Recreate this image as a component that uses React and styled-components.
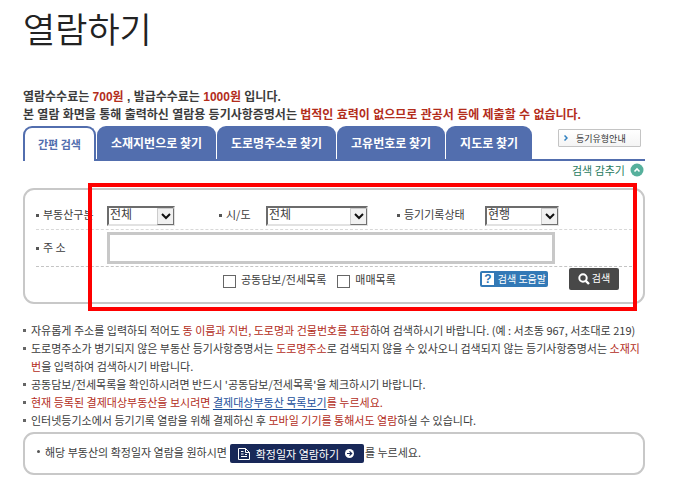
import styled, { createGlobalStyle } from "styled-components";

const mainStyle = {
  fontColor: "#3c3c3c",
  redColor: "#b32d1b",
  blueColor: "#526eae",
  lineColor: "#c8c8c8",
};

const GlobalStyle = createGlobalStyle`
  * {
    box-sizing: border-box;
  }
  body {
    margin: 0;
    background-color: #fff;
    color: ${mainStyle.fontColor};
    font-family: "Noto Sans CJK KR", sans-serif;
    font-size: 11px;
    line-height: 18px;
  }
  button, input, select {
    margin: 0;
    font-family: inherit;
  }
`;

const Wrap = styled.main`
  padding: 8px 55px 24px 23px;
`;
const Title = styled.h1`
  margin: 0 0 40px;
  font-size: 35px;
  font-weight: 350;
  line-height: 40px;
  color: #222;
`;
const Fee = styled.p`
  margin: 0;
  font-family: "Liberation Sans", "Noto Sans CJK KR", sans-serif;
  font-size: 12px;
  font-weight: 700;
  white-space: nowrap;
`;
const Red = styled.span`
  color: ${mainStyle.redColor};
`;
const TabBar = styled.div`
  display: flex;
  align-items: flex-end;
  justify-content: space-between;
  margin-top: 2px;
  background: linear-gradient(${mainStyle.blueColor}, ${mainStyle.blueColor})
    bottom / 100% 2px no-repeat;
`;
const Tabs = styled.div`
  display: flex;
  gap: 1px;
`;
const Tab = styled.button`
  height: 35px;
  padding: 0 ${(props) => (props.$on ? 13 : 14)}px 2px;
  border: 0 solid ${mainStyle.blueColor};
  border-width: ${(props) => (props.$on ? "2px 2px 0" : "0")};
  border-radius: 9px 9px 0 0;
  background-color: ${(props) => (props.$on ? "#fff" : mainStyle.blueColor)};
  color: ${(props) => (props.$on ? mainStyle.blueColor : "#fff")};
  font-size: ${(props) => (props.$on ? 11 : 12)}px;
  font-weight: 700;
  white-space: nowrap;
`;
const GuideBtn = styled.button`
  display: flex;
  align-items: center;
  gap: 8px;
  width: 83px;
  height: 18px;
  margin: 0 4px 14px 0;
  padding: 0 5px;
  border: 1px solid #c4c4c4;
  border-radius: 1px;
  background: linear-gradient(#fff, #f4f4f4);
  color: #333;
  font-size: 9px;
  white-space: nowrap;
`;
const HideBtn = styled.button`
  display: flex;
  align-items: center;
  gap: 5px;
  height: 18px;
  margin: 0 1px 9px auto;
  padding: 0;
  border: 0;
  background: none;
  color: #287a5e;
  font-size: 11px;
`;
const Panel = styled.div`
  position: relative;
  border: 2px solid ${mainStyle.lineColor};
  border-radius: 11px;
`;
const SearchForm = styled.form`
  padding: 0 11px;
`;
const Mark = styled.div`
  position: absolute;
  top: -7px;
  right: 6px;
  bottom: -9px;
  left: 63px;
  border: 4px solid #fe0000;
  pointer-events: none;
`;
const FilterRow = styled.div`
  display: grid;
  grid-template-columns: 71px 112px 47px 131px 88px 1fr;
  padding: 16px 0 3px;
  border-bottom: 1px dashed #d8d8d8;
`;
const AddressRow = styled.div`
  display: grid;
  grid-template-columns: 71px 1fr;
  align-items: center;
  padding: 2px 77px 2px 0;
  border-bottom: 1px dashed #c4c4c4;
`;
const Label = styled.label`
  display: flex;
  align-items: center;
  gap: 4px;
  height: 18px;
  padding-bottom: 3px;
  white-space: nowrap;

  &::before {
    content: "";
    width: 3px;
    height: 3px;
    margin-top: 4px;
    background-color: #555;
  }
`;
const SelectWrap = styled.div`
  position: relative;
  width: ${(props) => props.$width}px;
  height: 20px;
`;
const Select = styled.select`
  appearance: none;
  display: block;
  width: 100%;
  height: 20px;
  padding: 0 20px 4px 1px;
  border: solid;
  border-width: 2px;
  border-color: #6c6c6c #e2e2e2 #e2e2e2 #6c6c6c;
  border-radius: 0;
  background-color: #fff;
  color: ${mainStyle.fontColor};
  font-size: 12px;
  line-height: 12px;
`;
const Arrow = styled.span`
  position: absolute;
  top: 2px;
  right: 1px;
  display: flex;
  align-items: center;
  justify-content: center;
  width: 17px;
  height: 17px;
  border: 1px solid #707070;
  border-top-color: #ccc;
  border-left-color: #ccc;
  background-color: #f1f1f1;
  pointer-events: none;
`;
const AddressInput = styled.input`
  width: 100%;
  height: 32px;
  padding: 0 4px;
  border: 3px solid ${mainStyle.lineColor};
  background-color: #fff;
  font-size: 12px;
`;
const ActionRow = styled.div`
  display: flex;
  align-items: center;
  padding: 1px 13px 12px 187px;
`;
const Checks = styled.div`
  display: flex;
  gap: 11px;
  margin-right: auto;
`;
const CheckLabel = styled.label`
  display: flex;
  align-items: flex-end;
  gap: 5px;
  height: 18px;
  white-space: nowrap;
`;
const Check = styled.input`
  appearance: none;
  width: 13px;
  height: 13px;
  border: 1px solid #666;
  background-color: #fff;

  &:checked {
    background-color: ${mainStyle.blueColor};
  }
`;
const HelpBtn = styled.button`
  display: flex;
  align-items: center;
  gap: 4px;
  width: 68px;
  height: 16px;
  margin-right: 21px;
  padding: 0 2px;
  border: 0;
  border-radius: 2px;
  background-color: #3379b6;
  color: #fff;
  font-size: 10px;
  line-height: 14px;
  white-space: nowrap;
`;
const Question = styled.span`
  width: 12px;
  height: 12px;
  background-color: #fff;
  color: #2a73b3;
  font-family: "Liberation Sans", sans-serif;
  font-size: 12px;
  font-weight: 700;
  line-height: 12px;
`;
const SearchBtn = styled.button`
  display: flex;
  align-items: center;
  justify-content: center;
  gap: 2px;
  width: 50px;
  height: 22px;
  padding: 0 0 4px;
  border: 0;
  border-radius: 2px;
  background-color: #484848;
  color: #fff;
  font-size: 10px;
  white-space: nowrap;

  svg {
    margin-top: 4px;
  }
`;
const Notes = styled.ul`
  margin: 17px -5px 3px 0;
  padding: 0;
  list-style: none;
`;
const Note = styled.li`
  position: relative;
  padding-left: 8px;

  &::before {
    content: "";
    position: absolute;
    top: 8px;
    left: 0;
    width: 3px;
    height: 3px;
    background-color: #666;
  }
`;
const Link = styled.a`
  color: #1c4f9b;
  text-decoration: underline;
  text-underline-offset: 2px;
`;
const DatePanel = styled(Panel)`
  display: flex;
  align-items: center;
  height: 43px;
  padding: 0 11px 4px;
  white-space: nowrap;
`;
const Dot = styled.span`
  width: 3px;
  height: 3px;
  margin: 0 5px 0 1px;
  border-radius: 50%;
  background-color: #555;
`;
const DateBtn = styled.button`
  display: flex;
  align-items: center;
  justify-content: space-between;
  width: 134px;
  height: 19px;
  margin: 4px 1px 0 3px;
  padding: 0 10px 0 8px;
  border: 0;
  border-radius: 2px;
  background-color: #182858;
  color: #fff;
  font-size: 11px;
`;

const tabs = [
  "간편 검색",
  "소재지번으로 찾기",
  "도로명주소로 찾기",
  "고유번호로 찾기",
  "지도로 찾기",
];

const filters = [
  { id: "kind", label: "부동산구분", value: "전체", width: 68 },
  { id: "city", label: "시/도", value: "전체", width: 102 },
  { id: "state", label: "등기기록상태", value: "현행", width: 74 },
];

const Filter = ({ id, label, value, width }) => (
  <>
    <Label htmlFor={id}>{label}</Label>
    <SelectWrap $width={width}>
      <Select id={id}>
        <option>{value}</option>
      </Select>
      <Arrow>
        <svg width="10" height="7" viewBox="0 0 10 7" fill="none">
          <path d="M1 1l4 4 4-4" stroke="#111" strokeWidth="2" />
        </svg>
      </Arrow>
    </SelectWrap>
  </>
);

export default function App() {
  return (
    <>
      <GlobalStyle />
      <Wrap>
        <Title>열람하기</Title>
        <Fee>
          열람수수료는 <Red>700원</Red> , 발급수수료는 <Red>1000원</Red> 입니다.
        </Fee>
        <Fee>
          본 열람 화면을 통해 출력하신 열람용 등기사항증명서는{" "}
          <Red>법적인 효력이 없으므로 관공서 등에 제출할 수 없습니다.</Red>
        </Fee>
        <TabBar>
          <Tabs>
            {tabs.map((tab, i) => (
              <Tab key={tab} type="button" $on={i === 0}>
                {tab}
              </Tab>
            ))}
          </Tabs>
          <GuideBtn type="button">
            <svg width="4" height="6" viewBox="0 0 4 6" fill="none">
              <path d="M0.5 0.5L3 3 0.5 5.5" stroke="#2f80c0" strokeWidth="1.5" />
            </svg>
            등기유형안내
          </GuideBtn>
        </TabBar>
        <HideBtn type="button">
          검색 감추기
          <svg width="14" height="14" viewBox="0 0 14 14" fill="none">
            <circle cx="7" cy="7" r="6.5" fill="#56b09c" />
            <path d="M4.5 8.5L7 6l2.5 2.5" stroke="#fff" strokeWidth="1.6" />
          </svg>
        </HideBtn>
        <Panel>
          <SearchForm>
            <FilterRow>
              {filters.map((filter) => (
                <Filter key={filter.id} {...filter} />
              ))}
            </FilterRow>
            <AddressRow>
              <Label htmlFor="address">주 소</Label>
              <AddressInput id="address" type="text" />
            </AddressRow>
            <ActionRow>
              <Checks>
                <CheckLabel>
                  <Check type="checkbox" />
                  공동담보/전세목록
                </CheckLabel>
                <CheckLabel>
                  <Check type="checkbox" />
                  매매목록
                </CheckLabel>
              </Checks>
              <HelpBtn type="button">
                <Question>?</Question>
                검색 도움말
              </HelpBtn>
              <SearchBtn type="button">
                <svg width="12" height="12" viewBox="0 0 12 12" fill="none">
                  <circle cx="5" cy="5" r="3.7" stroke="#fff" strokeWidth="2" />
                  <path d="M7.8 7.8l3.2 3.2" stroke="#fff" strokeWidth="2.4" />
                </svg>
                검색
              </SearchBtn>
            </ActionRow>
          </SearchForm>
          <Mark />
        </Panel>
        <Notes>
          <Note>
            자유롭게 주소를 입력하되 적어도{" "}
            <Red>동 이름과 지번, 도로명과 건물번호를 포함</Red>하여 검색하시기
            바랍니다. (예 : 서초동 967, 서초대로 219)
          </Note>
          <Note>
            도로명주소가 병기되지 않은 부동산 등기사항증명서는{" "}
            <Red>도로명주소</Red>로 검색되지 않을 수 있사오니 검색되지 않는
            등기사항증명서는 <Red>소재지번</Red>을 입력하여 검색하시기 바랍니다.
          </Note>
          <Note>
            공동담보/전세목록을 확인하시려면 반드시 '공동담보/전세목록'을
            체크하시기 바랍니다.
          </Note>
          <Note>
            <Red>
              현재 등록된 결제대상부동산을 보시려면{" "}
              <Link href="#list">결제대상부동산 목록보기</Link>를 누르세요.
            </Red>
          </Note>
          <Note>
            인터넷등기소에서 등기기록 열람을 위해 결제하신 후{" "}
            <Red>모바일 기기를 통해서도 열람</Red>하실 수 있습니다.
          </Note>
        </Notes>
        <DatePanel>
          <Dot />
          해당 부동산의 확정일자 열람을 원하시면
          <DateBtn type="button">
            <svg width="12" height="12" viewBox="0 0 12 12" fill="none" stroke="#fff">
              <path d="M0.5 0.5h7l4 4v7h-11zM7.5 0.5v4h4M3 3.5h2.5M3 6h2.5M3 8.5h6M7 6.5h2" />
            </svg>
            확정일자 열람하기
            <svg width="9" height="9" viewBox="0 0 9 9" fill="none">
              <circle cx="4.5" cy="4.5" r="4.5" fill="#fff" />
              <path d="M2 4.5h4.5M4.5 2.3l2.2 2.2-2.2 2.2" stroke="#182858" strokeWidth="1.2" />
            </svg>
          </DateBtn>
          를 누르세요.
        </DatePanel>
      </Wrap>
    </>
  );
}
